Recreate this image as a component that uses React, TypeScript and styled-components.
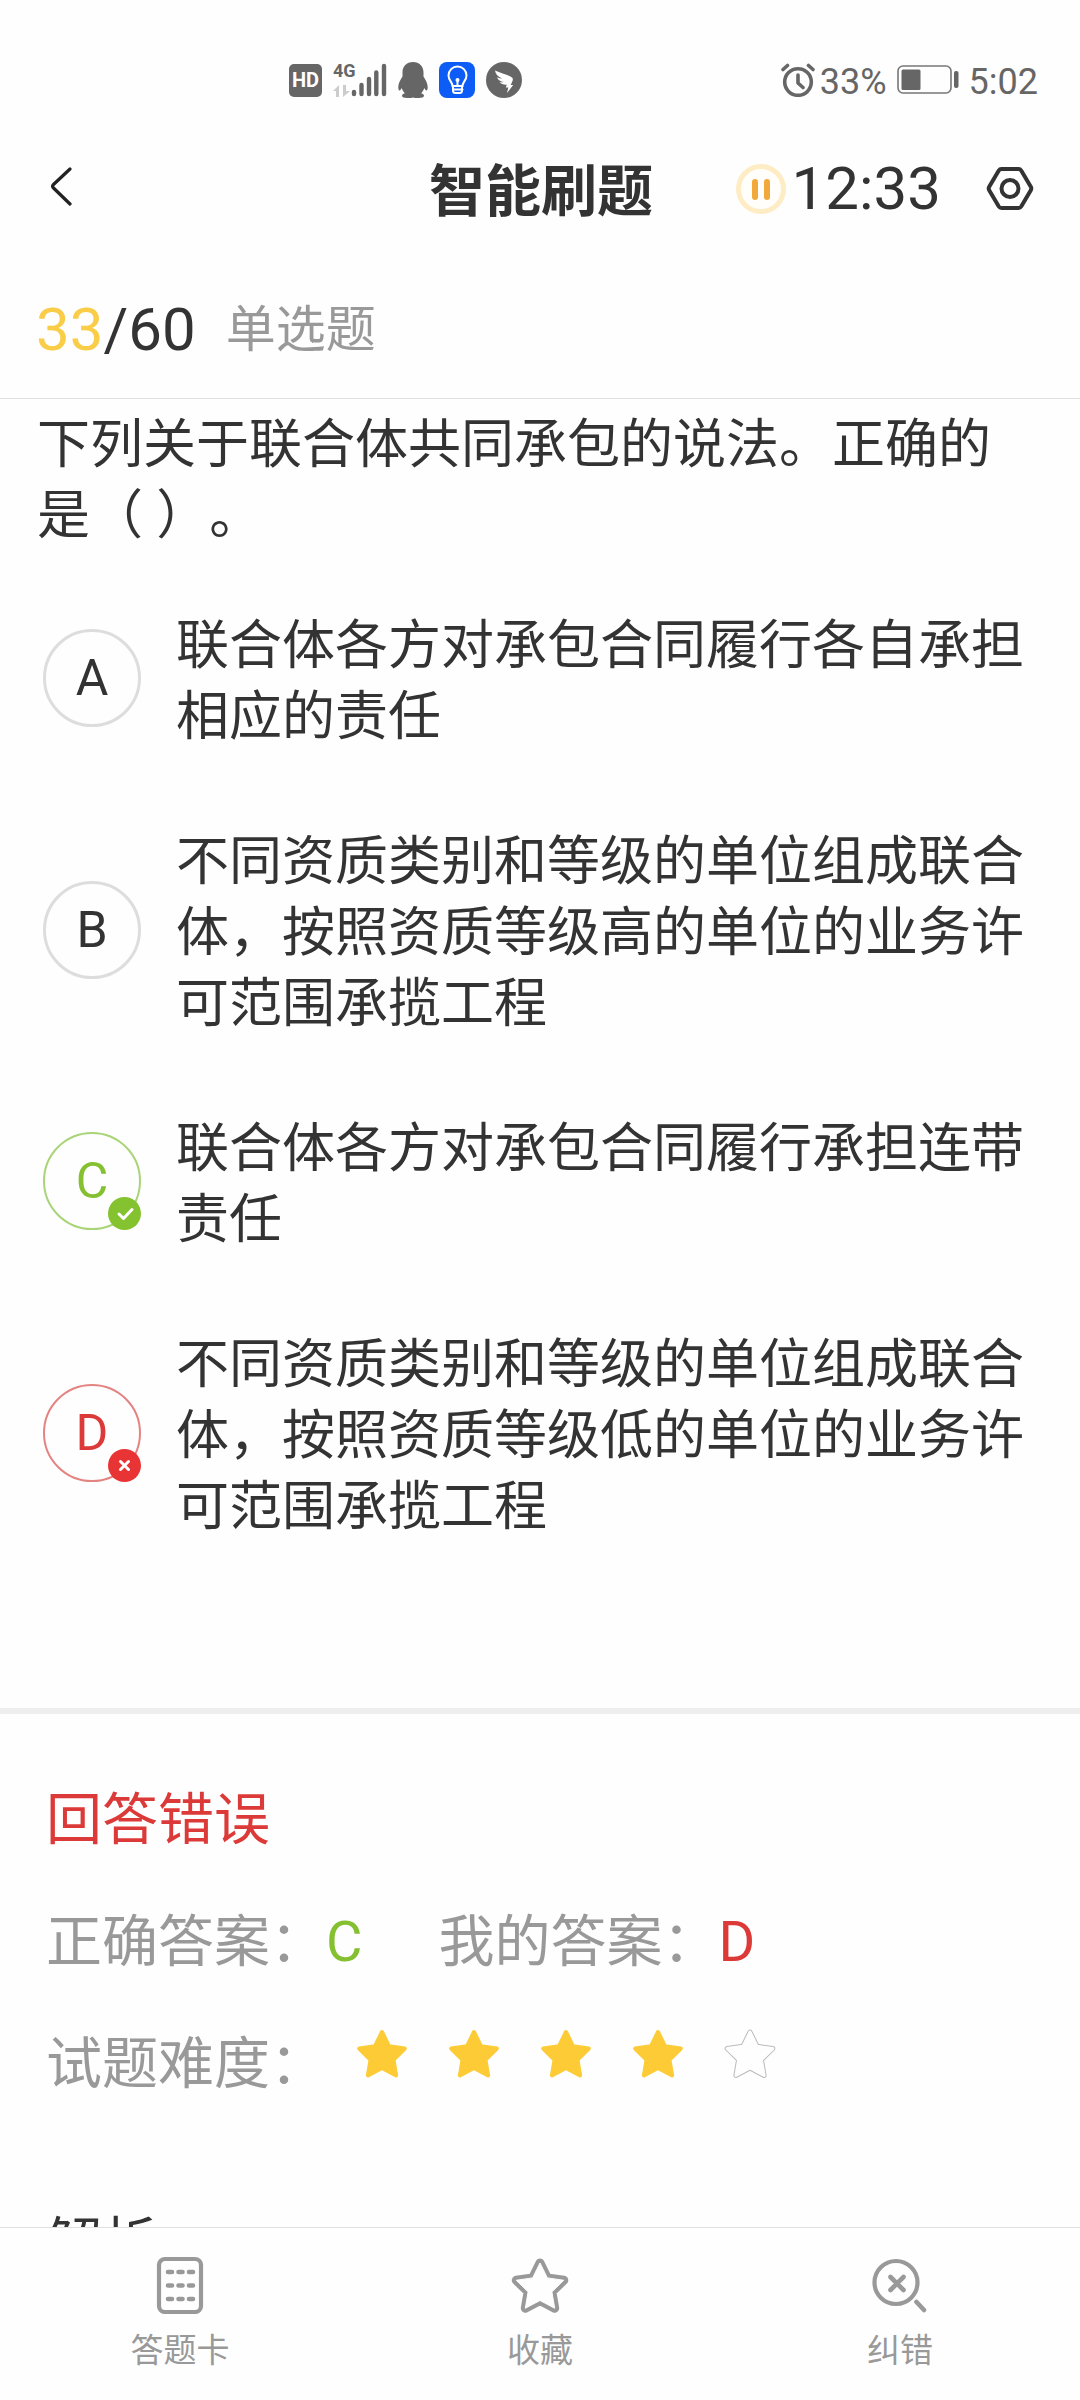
import React, { useState } from "react";
import styled, { createGlobalStyle } from "styled-components";

const ink = "#333333";
const muted = "#999999";
const green = "#84c030";
const red = "#dc3a38";
const amber = "#fccb35";
const statusGrey = "#666666";

const GlobalStyle = createGlobalStyle`
  * { box-sizing: border-box; }
  body {
    margin: 0;
    background: #fefefe;
    color: ${ink};
    font-family: Roboto, "Noto Sans CJK SC", sans-serif;
    text-spacing-trim: space-all;
  }
  button {
    padding: 0;
    border: 0;
    background: none;
    color: inherit;
    font: inherit;
    cursor: pointer;
  }
  svg { display: block; flex: none; }
`;

const Screen = styled.div`
  display: flex;
  flex-direction: column;
  height: 100vh;
`;

const StatusBar = styled.div`
  display: flex;
  justify-content: space-between;
  align-items: center;
  height: 100px;
  padding: 60px 42px 0 289px;
  color: ${statusGrey};
`;

const StatusGroup = styled.div<{ $gap: number }>`
  display: flex;
  align-items: center;
  gap: ${(p) => p.$gap}px;
`;

const StatusText = styled.span`
  padding-top: 4px;
  font-size: 36px;
  line-height: 40px;
`;

const HdBadge = styled.span`
  width: 33px;
  height: 33px;
  border-radius: 5px;
  background: ${statusGrey};
  color: #fff;
  font-size: 20px;
  font-weight: 700;
  line-height: 33px;
  text-align: center;
`;

const Network = styled.div`
  display: flex;
  align-items: flex-end;
  height: 34px;
`;

const NetworkType = styled.div`
  display: flex;
  flex-direction: column;
  justify-content: space-between;
  width: 18px;
  height: 34px;
  font-size: 18px;
  font-weight: 700;
  line-height: 16px;
`;

const NavBar = styled.header`
  display: grid;
  grid-template-columns: 1fr auto 1fr;
  align-items: center;
  height: 180px;
  padding: 0 46px 2px 48px;
`;

const Title = styled.h1`
  margin: 0;
  padding-top: 6px;
  font-size: 56px;
  font-weight: 700;
  line-height: 72px;
`;

const NavActions = styled.div`
  display: flex;
  justify-content: flex-end;
  align-items: center;
  gap: 45px;
`;

const Timer = styled.button`
  display: flex;
  align-items: center;
  gap: 6px;
  font-size: 60px;
  line-height: 72px;
`;

const Progress = styled.div`
  display: flex;
  align-items: center;
  gap: 30px;
  padding: 15px 36px 33px;
  border-bottom: 1px solid #e0e0e0;
  line-height: 70px;
`;

const Counter = styled.span`
  font-size: 60px;
`;

const Current = styled.span`
  color: #f9cd48;
`;

const Kind = styled.span`
  color: ${muted};
  font-size: 50px;
`;

const Content = styled.main`
  flex: 1;
  min-height: 0;
  overflow-y: auto;
  scrollbar-width: none;
`;

const Question = styled.p`
  margin: 0;
  padding: 11px 38px 0 37px;
  font-size: 53px;
  line-height: 71px;
`;

const Options = styled.div`
  display: flex;
  flex-direction: column;
  gap: 66px;
  padding: 51px 43px 165px;
  border-bottom: 6px solid #eeeeee;
`;

type Mark = "none" | "right" | "wrong";
const markColor = { none: ink, right: green, wrong: red };
const ringBorder = {
  none: "3px solid #dddddd",
  right: "2px solid #a9d477",
  wrong: "2px solid #e38482",
};

const OptionRow = styled.button`
  display: grid;
  grid-template-columns: 98px 1fr;
  align-items: center;
  gap: 35px;
  text-align: left;
`;

const OptionText = styled.span`
  padding-top: 8px;
  font-size: 53px;
  line-height: 71px;
`;

const Letter = styled.span<{ $mark: Mark }>`
  position: relative;
  display: flex;
  align-items: center;
  justify-content: center;
  height: 98px;
  border: ${(p) => ringBorder[p.$mark]};
  border-radius: 50%;
  color: ${(p) => markColor[p.$mark]};
  font-size: 50px;
`;

const Corner = styled.span`
  position: absolute;
  right: -2px;
  bottom: -2px;
`;

const Result = styled.section`
  display: flex;
  flex-direction: column;
  gap: 50px;
  padding: 70px 46px 48px;
  color: ${muted};
  font-size: 56px;
  line-height: 72px;
`;

const Verdict = styled.h2`
  margin: 0;
  color: ${red};
  font-size: 56px;
  font-weight: 400;
`;

const ResultRow = styled.div`
  display: flex;
  align-items: center;
`;

const Answer = styled.span<{ $mark: Mark }>`
  margin-right: 76px;
  color: ${(p) => markColor[p.$mark]};
`;

const Stars = styled.div`
  display: flex;
  gap: 42px;
  padding: 0 0 20px 31px;
`;

const AnalysisTitle = styled.h2`
  margin: 58px 0 0;
  color: ${ink};
  font-size: 56px;
  font-weight: 400;
`;

const TabBar = styled.nav`
  display: grid;
  grid-template-columns: repeat(3, 1fr);
  height: 173px;
  border-top: 1px solid #e0e0e0;
`;

const Tab = styled.button`
  display: flex;
  flex-direction: column;
  align-items: center;
  gap: 13px;
  padding-top: 28px;
  color: ${muted};
  font-size: 33px;
  line-height: 48px;
`;

const starPoints = (cx: number, cy: number, outer: number, inner: number) =>
  Array.from({ length: 10 }, (_, i) => {
    const radius = i % 2 ? inner : outer;
    const angle = (Math.PI / 5) * i - Math.PI / 2;
    return `${(cx + radius * Math.cos(angle)).toFixed(2)},${(cy + radius * Math.sin(angle)).toFixed(2)}`;
  }).join(" ");

const RatingStar = ({ filled }: { filled: boolean }) => {
  const points = starPoints(25, 27, 24, 12);
  return (
    <svg width="50" height="50" viewBox="0 0 50 50" overflow="visible" strokeLinejoin="round">
      <polygon points={points} fill={filled ? amber : "#bbb"} stroke={filled ? amber : "#bbb"} strokeWidth={filled ? 4 : 5} />
      {!filled && <polygon points={points} fill="#fefefe" stroke="#fefefe" strokeWidth="3" />}
    </svg>
  );
};

const SignalIcon = () => (
  <svg width="36" height="34" viewBox="0 0 36 34" stroke={statusGrey} strokeWidth="4.400" strokeLinecap="round">
    <path d="M3 31v-2M10.500 31v-9M18 31V16M25.300 31V9.500M33 31V3" />
  </svg>
);

const DataArrows = () => (
  <svg width="18" height="12" viewBox="0 0 18 12" fill="#cccccc">
    <path d="M6 0v12H3V6H0zM10 0h3v6h4l-7 6z" />
  </svg>
);

const PenguinIcon = () => (
  <svg width="30" height="36" viewBox="0 0 30 36" fill={statusGrey}>
    <path d="M15 0C8.500 0 4.500 4.500 4.500 10.500v4C2.500 17.500.300 21.500.300 25c0 2 .4 3.600 1.100 3.600.8 0 1.800-1.500 2.400-2.600.5 2 1.500 3.800 3 5.200-1.700.6-2.800 1.500-2.800 2.600C4 35.300 6 36 9.200 36c2.600 0 4.800-.3 5.800-.6 1 .3 3.200.6 5.800.6 3.200 0 5.200-.7 5.200-2.200 0-1.100-1.100-2-2.800-2.600 1.500-1.400 2.500-3.200 3-5.200.6 1.100 1.600 2.600 2.400 2.600.7 0 1.100-1.600 1.100-3.600 0-3.500-2.200-7.500-4.200-10.500v-4C25.500 4.500 21.500 0 15 0z" />
  </svg>
);

const BulbIcon = () => (
  <svg width="36" height="36" viewBox="0 0 36 36" fill="none" stroke="#fff" strokeWidth="2" strokeLinecap="round">
    <rect width="36" height="36" rx="8" fill="#0d5cf5" stroke="none" />
    <path d="M13.500 24c0-4-4-5.500-4-10.500a9 9 0 0 1 18 0c0 5-4 6.500-4 10.500zM14 27.500h9.500M14 24v4.500c0 2 1.500 2.500 2.500 2.500h4c1 0 2.500-.5 2.500-2.500V24M18.500 18v6" />
    <circle cx="18.500" cy="18" r="2" fill="#fff" stroke="none" />
  </svg>
);

const WingIcon = () => (
  <svg width="36" height="36" viewBox="0 0 36 36">
    <circle cx="18" cy="18" r="18" fill={statusGrey} />
    <path d="M9 8.500c5 2.500 11 3.700 15.500 6 2.300 1.200 2.800 2.500 2 4.500l-1.800 4h2.500L21 31l1.300-5.500h-2.500l1-2.800c-3 .2-5.600-.6-7.300-2.700 1.600.3 3 .3 4.200 0-3.200-.4-5.600-2-6.700-4.800 1.800.9 3.500 1.300 5.200 1.400C12 14.800 9.500 12 9 8.500z" fill="#fff" />
  </svg>
);

const AlarmIcon = () => (
  <svg width="34" height="34" viewBox="0 0 34 34" fill="none" stroke={statusGrey} strokeWidth="3.600" strokeLinecap="round" strokeLinejoin="round">
    <circle cx="17" cy="19" r="13.300" />
    <path d="M17 12v8l5 4.500M2 6.500l4.500-4M32 6.500l-4.500-4" />
  </svg>
);

const BatteryIcon = () => (
  <svg width="62" height="30" viewBox="0 0 62 30">
    <rect x="1" y="1" width="53" height="27" rx="5" fill="none" stroke="#777" strokeWidth="1.600" />
    <rect x="4.500" y="4.500" width="19" height="20.500" rx="1.500" fill={statusGrey} />
    <rect x="57" y="6" width="4.500" height="17" rx="2" fill={statusGrey} />
  </svg>
);

const BackIcon = () => (
  <svg width="24" height="40" viewBox="0 0 24 40" fill="none" stroke="#222" strokeWidth="3.200" strokeLinecap="round">
    <path d="M22 2 5.500 17.500c-1.300 1.300-1.300 2.200 0 3.500L22 37" />
  </svg>
);

const PauseIcon = () => (
  <svg width="50" height="50" viewBox="0 0 50 50">
    <circle cx="25" cy="25" r="22.500" fill="#fffefa" stroke="#feecc4" strokeWidth="5" />
    <rect x="16" y="15" width="6" height="21" rx="3" fill="#f2a93b" />
    <rect x="28" y="15" width="6" height="21" rx="3" fill="#f2a93b" />
  </svg>
);

const HexNutIcon = () => (
  <svg width="48" height="46" viewBox="0 0 48 46" fill="none" stroke={ink} strokeWidth="4" strokeLinejoin="round">
    <path d="M15.500 3h17c1.300 0 2 .4 2.700 1.500l9.600 16.300c.7 1.200.7 2.200 0 3.400L35.200 40.500c-.7 1.100-1.400 1.500-2.700 1.500h-17c-1.300 0-2-.4-2.700-1.500L3.200 24.200c-.7-1.200-.7-2.200 0-3.400L12.800 4.500c.7-1.100 1.400-1.500 2.700-1.500z" />
    <circle cx="24" cy="22.500" r="8.500" />
  </svg>
);

const CornerIcon = ({ mark }: { mark: Mark }) => (
  <svg width="33" height="33" viewBox="0 0 33 33" fill="none" stroke="#fff" strokeWidth="3" strokeLinecap="round" strokeLinejoin="round">
    <circle cx="16.500" cy="16.500" r="16.500" fill={mark === "right" ? "#84c22f" : "#e83434"} stroke="none" />
    <path d={mark === "right" ? "M11 17l4.500 4.500 8.500-9" : "M12.500 12.500l8 8M20.500 12.500l-8 8"} />
  </svg>
);

const CardIcon = () => (
  <svg width="58" height="58" viewBox="0 0 58 58" fill="none" stroke={muted} strokeWidth="4.200" strokeLinecap="round">
    <rect x="8" y="3" width="42" height="53" rx="6" />
    <path d="M17 16h4M27.500 16h4M38 16h4M17 29.500h4M27.500 29.500h4M38 29.500h4M17 43h4M27.500 43h4M38 43h4" strokeWidth="4.600" />
  </svg>
);

const FavouriteIcon = () => {
  const points = starPoints(29, 32, 25, 12.5);
  return (
    <svg width="58" height="58" viewBox="0 0 58 58" strokeLinejoin="round">
      <polygon points={points} fill={muted} stroke={muted} strokeWidth="9" />
      <polygon points={points} fill="#fefefe" stroke="#fefefe" strokeWidth="1" />
    </svg>
  );
};

const ReportIcon = () => (
  <svg width="58" height="58" viewBox="0 0 58 58" fill="none" stroke={muted} strokeWidth="4.200" strokeLinecap="round">
    <circle cx="25" cy="26.500" r="21.500" />
    <path d="M19.500 21l13 13M32.500 21l-13 13M45.500 46l7.500 8" strokeWidth="4.600" />
  </svg>
);

const options: { letter: string; mark: Mark; text: string }[] = [
  { letter: "A", mark: "none", text: "联合体各方对承包合同履行各自承担相应的责任" },
  { letter: "B", mark: "none", text: "不同资质类别和等级的单位组成联合体，按照资质等级高的单位的业务许可范围承揽工程" },
  { letter: "C", mark: "right", text: "联合体各方对承包合同履行承担连带责任" },
  { letter: "D", mark: "wrong", text: "不同资质类别和等级的单位组成联合体，按照资质等级低的单位的业务许可范围承揽工程" },
];

const tabs = [
  { label: "答题卡", Icon: CardIcon },
  { label: "收藏", Icon: FavouriteIcon },
  { label: "纠错", Icon: ReportIcon },
];

export default function App() {
  const [difficulty] = useState(4);
  return (
    <Screen>
      <GlobalStyle />
      <StatusBar>
        <StatusGroup $gap={11}>
          <HdBadge>HD</HdBadge>
          <Network>
            <NetworkType>
              <span>4G</span>
              <DataArrows />
            </NetworkType>
            <SignalIcon />
          </Network>
          <PenguinIcon />
          <BulbIcon />
          <WingIcon />
        </StatusGroup>
        <StatusGroup $gap={10}>
          <StatusGroup $gap={5}>
            <AlarmIcon />
            <StatusText>33%</StatusText>
          </StatusGroup>
          <BatteryIcon />
          <StatusText>5:02</StatusText>
        </StatusGroup>
      </StatusBar>

      <NavBar>
        <div>
          <button type="button" aria-label="返回">
            <BackIcon />
          </button>
        </div>
        <Title>智能刷题</Title>
        <NavActions>
          <Timer type="button">
            <PauseIcon />
            <span>12:33</span>
          </Timer>
          <button type="button" aria-label="设置">
            <HexNutIcon />
          </button>
        </NavActions>
      </NavBar>

      <Progress>
        <Counter>
          <Current>33</Current>/60
        </Counter>
        <Kind>单选题</Kind>
      </Progress>

      <Content>
        <Question>下列关于联合体共同承包的说法。正确的是（ ）。</Question>
        <Options>
          {options.map(({ letter, mark, text }) => (
            <OptionRow type="button" key={letter}>
              <Letter $mark={mark}>
                {letter}
                {mark !== "none" && (
                  <Corner>
                    <CornerIcon mark={mark} />
                  </Corner>
                )}
              </Letter>
              <OptionText>{text}</OptionText>
            </OptionRow>
          ))}
        </Options>

        <Result>
          <Verdict>回答错误</Verdict>
          <ResultRow>
            <span>正确答案：</span>
            <Answer $mark="right">C</Answer>
            <span>我的答案：</span>
            <Answer $mark="wrong">D</Answer>
          </ResultRow>
          <ResultRow>
            <span>试题难度：</span>
            <Stars>
              {[1, 2, 3, 4, 5].map((n) => (
                <RatingStar key={n} filled={n <= difficulty} />
              ))}
            </Stars>
          </ResultRow>
          <AnalysisTitle>解析</AnalysisTitle>
        </Result>
      </Content>

      <TabBar>
        {tabs.map(({ label, Icon }) => (
          <Tab type="button" key={label}>
            <Icon />
            {label}
          </Tab>
        ))}
      </TabBar>
    </Screen>
  );
}
